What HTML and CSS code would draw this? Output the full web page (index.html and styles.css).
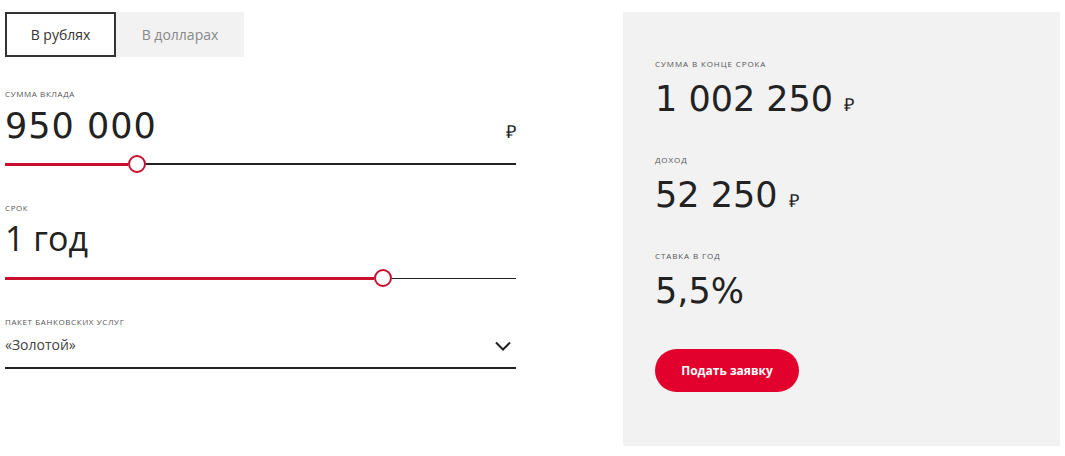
FILE: index.html
```html
<!DOCTYPE html>
<html lang="ru">
<head>
  <meta charset="UTF-8">
  <meta name="viewport" content="width=device-width, initial-scale=1.0">
  <title>Калькулятор вклада</title>
  <link rel="stylesheet" href="styles.css">
</head>
<body>
  <div class="calc">
    <!-- Form -->
    <div class="form">
      <div class="tabs">
        <button class="tab active">В рублях</button>
        <button class="tab">В долларах</button>
      </div>

      <div class="field">
        <div class="label">Сумма вклада</div>
        <div class="value-row">
          <span class="value num">950 000</span>
          <span class="cur">₽</span>
        </div>
        <div class="slider">
          <div class="fill" style="width: 123px"></div>
          <div class="thumb"></div>
          <div class="rest"></div>
        </div>
      </div>

      <div class="field">
        <div class="label">Срок</div>
        <div class="value-row">
          <span class="value">1 год</span>
        </div>
        <div class="slider thin">
          <div class="fill" style="width: 369px"></div>
          <div class="thumb"></div>
          <div class="rest"></div>
        </div>
      </div>

      <div class="field">
        <div class="label">Пакет банковских услуг</div>
        <div class="select">
          <span>«Золотой»</span>
          <svg width="16" height="10" viewBox="0 0 16 10">
            <path d="M1 1.5 L8 8.5 L15 1.5" fill="none" stroke="#222" stroke-width="2"/>
          </svg>
        </div>
      </div>
    </div>

    <!-- Result -->
    <div class="result">
      <div class="label">Сумма в конце срока</div>
      <div class="big">1 002 250 <span class="rub">₽</span></div>

      <div class="label">Доход</div>
      <div class="big">52 250 <span class="rub">₽</span></div>

      <div class="label">Ставка в год</div>
      <div class="big">5,5%</div>

      <button class="submit">Подать заявку</button>
    </div>
  </div>
</body>
</html>
```

FILE: styles.css
```css
body {
  margin: 0;
  font-family: "Open Sans", Arial, sans-serif;
  color: #222;
  background: #fff;
}

.calc {
  display: flex;
  padding: 12px 5px 10px 5px;
  gap: 107px;
}

.form {
  width: 511px;
}

.tabs {
  display: flex;
  margin-bottom: 32px;
}

.tab {
  height: 45px;
  padding: 0 22px;
  border: none;
  background: #f2f2f2;
  color: #888;
  font-family: "Open Sans", Arial, sans-serif;
  font-size: 14px;
}

.tab.active {
  width: 111px;
  background: #fff;
  color: #333;
  border: 2px solid #333;
}

.tab + .tab {
  width: 128px;
}

.label {
  font-size: 8px;
  letter-spacing: 0.6px;
  text-transform: uppercase;
  color: #555;
  line-height: 10px;
}

.field + .field {
  margin-top: 30px;
}

.value-row {
  display: flex;
  justify-content: space-between;
  align-items: baseline;
  height: 50px;
}

.value {
  font-size: 34px;
  line-height: 50px;
}

.value.num {
  font-family: "DejaVu Sans", sans-serif;
  font-size: 35px;
  letter-spacing: 1px;
  padding-top: 2px;
}

.cur {
  font-size: 18px;
  line-height: 50px;
}

.slider {
  display: flex;
  align-items: center;
  height: 18px;
  margin-top: 6px;
}

.fill {
  height: 3px;
  background: #c8102e;
}

.thumb {
  width: 14px;
  height: 14px;
  border: 2px solid #c8102e;
  border-radius: 50%;
  background: #fff;
}

.rest {
  flex: 1;
  height: 2px;
  background: #222;
}

.slider.thin .rest {
  height: 1px;
}

.select {
  display: flex;
  justify-content: space-between;
  align-items: center;
  height: 34px;
  padding: 0 5px 6px 0;
  border-bottom: 2px solid #222;
  font-size: 14px;
  color: #444;
}

.select svg {
  margin-top: 4px;
}

.result {
  width: 437px;
  height: 434px;
  box-sizing: border-box;
  padding: 47px 32px;
  background: #f2f2f2;
}

.result .label {
  margin-bottom: 12px;
  letter-spacing: 0.9px;
}

.big {
  font-family: "DejaVu Sans", sans-serif;
  font-size: 35px;
  line-height: 36px;
  margin-bottom: 38px;
}

.rub {
  font-family: "Open Sans", Arial, sans-serif;
  font-size: 18px;
  line-height: 1;
}

.submit {
  margin-top: 2px;
  width: 144px;
  height: 43px;
  border: none;
  border-radius: 22px;
  background: #e2012d;
  color: #fff;
  font-family: "Open Sans", Arial, sans-serif;
  font-weight: 700;
  font-size: 12px;
}
```
